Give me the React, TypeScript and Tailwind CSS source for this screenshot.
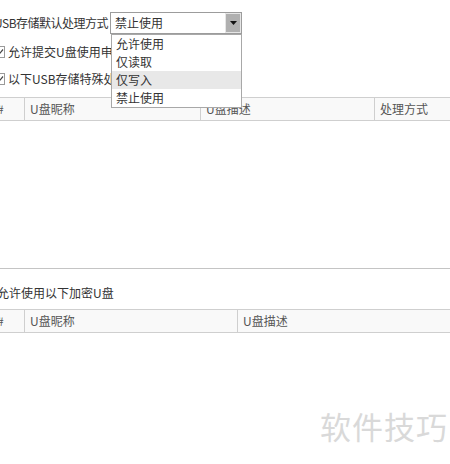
import React from 'react';

const options = ['允许使用', '仅读取', '仅写入', '禁止使用'];

const Checkbox: React.FC<{ label: string }> = ({ label }) => (
    <div className="flex items-center h-[16px]">
        <span className="w-[12px] h-[12px] border border-[#9a9a9a] bg-white flex items-center justify-center">
            <svg width="9" height="9" viewBox="0 0 9 9">
                <path d="M1 4.5 L3.5 7 L8 1.5" fill="none" stroke="#444" strokeWidth="1.2" />
            </svg>
        </span>
        <span className="ml-[3px] whitespace-nowrap">{label}</span>
    </div>
);

interface Col {
    title: string;
    width?: number;
}

const TableHeader: React.FC<{ cols: Col[] }> = ({ cols }) => (
    <div className="flex h-[24px] w-[480px] border-y border-[#cfcfcf] bg-[#f9f9f9] text-[#555]">
        {cols.map((c, i) => (
            <div
                key={i}
                className={`flex items-center pl-[5px] h-full ${i > 0 ? 'border-l border-[#cfcfcf]' : ''} ${c.width ? 'shrink-0' : 'flex-1'}`}
                style={c.width ? { width: c.width } : undefined}
            >
                {c.title}
            </div>
        ))}
    </div>
);

const App: React.FC = () => {
    return (
        <div
            className="relative w-[450px] h-[464px] overflow-hidden bg-white text-[12px] text-[#333]"
            style={{ fontFamily: '"Microsoft YaHei", "Noto Sans CJK SC", sans-serif' }}
        >
            <div className="ml-[-8px] pt-[12px]">
                {/* default handling row */}
                <div className="flex items-center h-[22px]">
                    <span className="w-[118px] shrink-0 pl-[2px] tracking-[-0.5px] whitespace-nowrap overflow-hidden">USB存储默认处理方式</span>
                    <div className="relative w-[132px] h-[22px] border border-[#9c9c9c] bg-white flex items-center">
                        <span className="pl-[4px] flex-1">禁止使用</span>
                        <div className="w-[16px] h-full bg-[#b0b0b0] border border-[#e6e6e6] flex items-center justify-center">
                            <svg width="7" height="4" viewBox="0 0 7 4">
                                <path d="M0 0 H7 L3.5 4 Z" fill="#111" />
                            </svg>
                        </div>
                        {/* open list */}
                        <div className="absolute left-[0px] top-[21px] w-[131px] border border-[#a8a8a8] bg-white z-10">
                            {options.map((o, i) => (
                                <div
                                    key={o}
                                    className={`h-[18px] flex items-center pl-[4px] ${i === 2 ? 'bg-[#e8e8e8]' : ''}`}
                                >
                                    {o}
                                </div>
                            ))}
                        </div>
                    </div>
                </div>

                <div className="mt-[10px] ml-[1px]">
                    <Checkbox label="允许提交U盘使用申请" />
                </div>
                <div className="mt-[11px] ml-[1px]">
                    <Checkbox label="以下USB存储特殊处理方式" />
                </div>

                <div className="mt-[10px]">
                    <TableHeader
                        cols={[
                            { title: '#', width: 32 },
                            { title: 'U盘昵称', width: 176 },
                            { title: 'U盘描述', width: 174 },
                            { title: '处理方式' },
                        ]}
                    />
                    <div className="h-[148px] w-[480px] border-b border-[#c4c4c4]" />
                </div>

                <div className="h-[24px] mt-[12px] flex items-center pl-[5px]">允许使用以下加密U盘</div>

                <div className="mt-[4px]">
                    <TableHeader
                        cols={[
                            { title: '#', width: 32 },
                            { title: 'U盘昵称', width: 213 },
                            { title: 'U盘描述' },
                        ]}
                    />
                </div>
            </div>

            <div className="absolute left-[320px] top-[410px] text-[31px] leading-none tracking-[1px] text-[#d9d9d9] whitespace-nowrap">
                软件技巧
            </div>
        </div>
    );
};

export default App;
